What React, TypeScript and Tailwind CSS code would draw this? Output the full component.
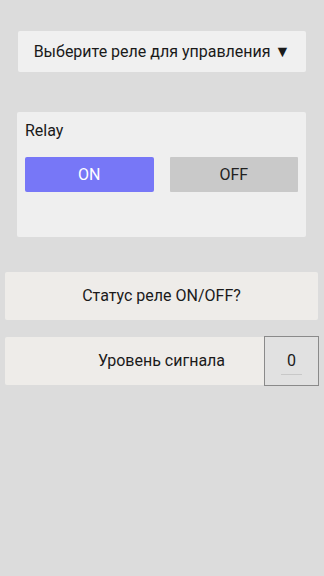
export default function App() {
  return (
    <div className="min-h-[576px] w-[324px] bg-[#dcdcdc] font-['Roboto',sans-serif] text-[#1a1a1a]">
      <div className="pt-[31px] pl-[18px] pr-[18px]">
        <div className="flex h-[41px] items-center justify-center rounded-[2px] bg-[#f0f0f0] text-[16px]">
          Выберите реле для управления ▼
        </div>
      </div>

      <div className="mt-[40px] ml-[17px] mr-[18px] h-[125px] rounded-[2px] bg-[#efefef] px-[8px] pt-[9px]">
        <div className="text-[16px] leading-[19px]">Relay</div>
        <div className="mt-[17px] flex gap-[16px]">
          <button className="h-[35px] w-[129px] rounded-[2px] bg-[#7777f7] pt-px text-[16px] text-white">ON</button>
          <button className="h-[35px] w-[129px] rounded-[1px] bg-[#c9c9c9] pt-px text-[16px] text-[#222]">OFF</button>
        </div>
      </div>

      <div className="mt-[35px] px-[5px]">
        <button className="flex h-[48px] w-[313px] items-center justify-center rounded-[2px] bg-[#eeece9] text-[16px]">
          Статус реле ON/OFF?
        </button>
      </div>

      <div className="mt-[16px] flex items-center pl-[5px]">
        <button className="flex h-[48px] w-[259px] items-center justify-center rounded-l-[2px] bg-[#eeece9] pl-[54px] text-[16px]">
          Уровень сигнала
        </button>
        <div className="relative flex h-[50px] w-[55px] items-center justify-center border border-[#8a8a8a] bg-[#e1e1e1] text-[16px]">
          0
          <div className="absolute bottom-[10px] left-[16px] right-[16px] h-px bg-[#c8c8c8]" />
        </div>
      </div>
    </div>
  )
}
